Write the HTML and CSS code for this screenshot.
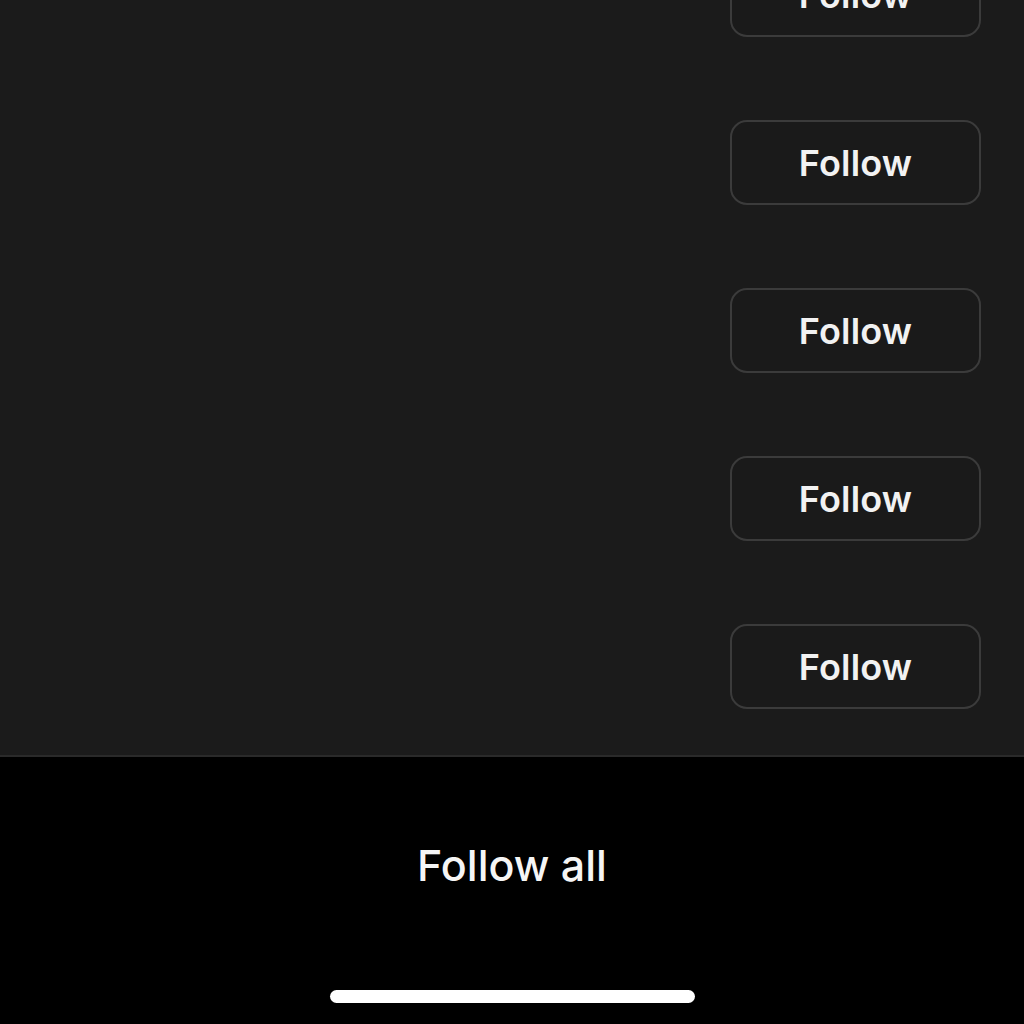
FILE: index.html
```html
<!DOCTYPE html>
<html>
<head>
<meta charset="utf-8">
<link rel="stylesheet" href="styles.css">
</head>
<body>
<div class="screen">
  <div class="list">
    <div class="rows">
      <div class="row"><button class="follow">Follow</button></div>
      <div class="row"><button class="follow">Follow</button></div>
      <div class="row"><button class="follow">Follow</button></div>
      <div class="row"><button class="follow">Follow</button></div>
      <div class="row"><button class="follow">Follow</button></div>
    </div>
  </div>
  <div class="footer">
    <div class="follow-all">Follow all</div>
    <div class="home-indicator"></div>
  </div>
</div>
</body>
</html>
```
FILE: styles.css
```css
* { box-sizing: border-box; }
html, body { margin: 0; padding: 0; background: #000; }
body { font-family: Inter, "Noto Sans", sans-serif; }
.screen {
  width: 1024px;
  height: 1024px;
  display: flex;
  flex-direction: column;
  overflow: hidden;
}
.list {
  height: 757px;
  background: #1b1b1b;
  border-bottom: 2px solid #2a2a2a;
  overflow: hidden;
  flex-shrink: 0;
}
.rows {
  margin-top: -48px;
  display: flex;
  flex-direction: column;
  gap: 83px;
  padding-right: 43px;
  align-items: flex-end;
}
.row { display: flex; }
.follow {
  width: 251px;
  height: 85px;
  border: 2px solid #3b3b3b;
  border-radius: 17px;
  background: #1a1a1a;
  color: #f2f2f2;
  font-family: Inter, "Noto Sans", sans-serif;
  font-weight: 600;
  font-size: 36px;
  padding: 0;
  letter-spacing: 0.2px;
}
.footer {
  flex: 1;
  background: #000;
  display: flex;
  flex-direction: column;
  align-items: center;
}
.follow-all {
  margin-top: 82px;
  color: #f5f5f5;
  font-size: 43px;
  font-weight: 500;
  line-height: 52px;
}
.home-indicator {
  margin-top: auto;
  margin-bottom: 21px;
  width: 365px;
  height: 13px;
  border-radius: 7px;
  background: #fff;
}
```
